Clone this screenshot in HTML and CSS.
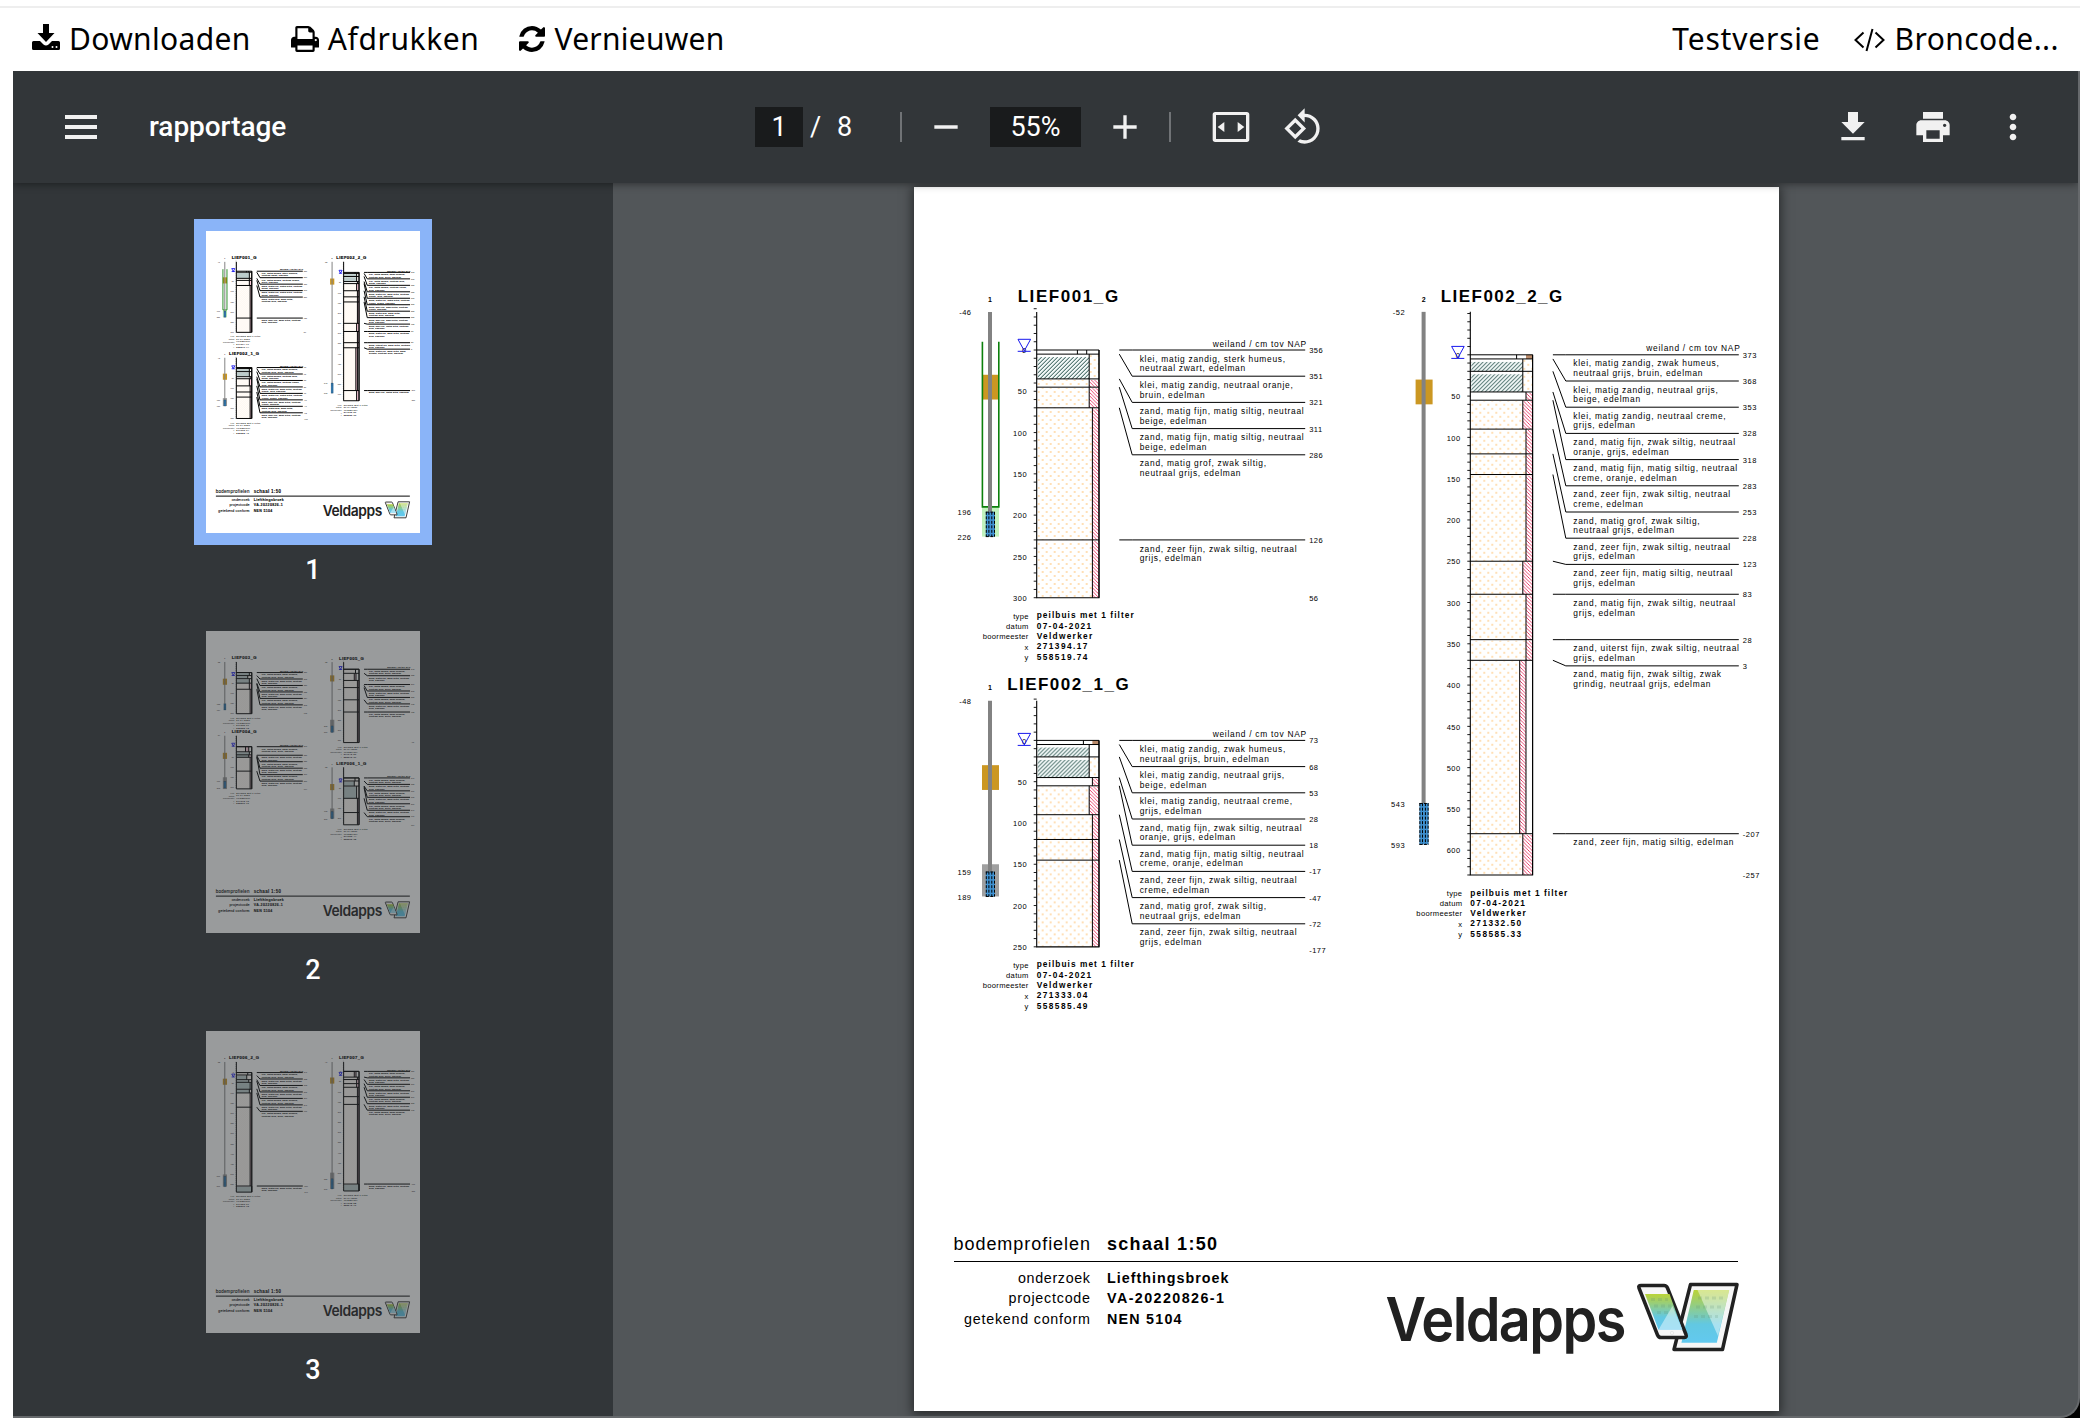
FILE: index.html
```html
<!DOCTYPE html>
<html lang="nl">
<head>
<meta charset="utf-8">
<title>rapportage</title>
<link rel="stylesheet" href="styles.css">
</head>
<body>
<header class="actions">
  <a class="action download"><svg class="ico-download" viewBox="0 0 28 26"><path d="M11 0h6v9h5.500l-8.500 9-8.500-9H11zM1.500 17h6.500l3.500 3.500q2.500 2 5 0L20 17h6.500q1.500 0 1.500 1.500v6q0 1.500-1.500 1.500h-25Q0 26 0 24.500v-6Q0 17 1.500 17z"/><circle cx="20.500" cy="23" r="1" fill="#fff"/><circle cx="24.500" cy="23" r="1" fill="#fff"/></svg><span>Downloaden</span></a>
  <a class="action print"><svg class="ico-print" viewBox="0 128 1664 1536"><path d="M384 1536h896v-256h-896v256zm0-640h896v-384h-160q-40 0-68-28t-28-68v-160h-640v640zm1152 64q0-26-19-45t-45-19-45 19-19 45 19 45 45 19 45-19 19-45zm128 0v416q0 13-9.500 22.500t-22.500 9.500h-224v160q0 40-28 68t-68 28h-960q-40 0-68-28t-28-68v-160h-224q-13 0-22.500-9.500t-9.500-22.500v-416q0-79 56.500-135.500t135.500-56.500h64v-544q0-40 28-68t68-28h672q40 0 88 20t76 48l152 152q28 28 48 76t20 88v256h64q79 0 135.500 56.500t56.500 135.500z"/></svg><span>Afdrukken</span></a>
  <a class="action refresh"><svg class="ico-refresh" viewBox="0 0 1536 1536"><path d="M1511 928q0 5-1 7-64 268-268 434.500t-478 166.500q-146 0-282.500-55t-243.500-157l-129 129q-19 19-45 19t-45-19-19-45v-448q0-26 19-45t45-19h448q26 0 45 19t19 45-19 45l-137 137q71 66 161 102t187 36q134 0 250-65t186-179q11-17 53-117 8-23 30-23h192q13 0 22.500 9.500t9.500 22.500zm25-800v448q0 26-19 45t-45 19h-448q-26 0-45-19t-19-45 19-45l138-138q-148-137-349-137-134 0-250 65t-186 179q-11 17-53 117-8 23-30 23h-199q-13 0-22.500-9.500t-9.500-22.500v-7q65-268 270-434.500t480-166.500q146 0 284 55.500t245 156.500l130-129q19-19 45-19t45 19 19 45z"/></svg><span>Vernieuwen</span></a>
  <span class="spring"></span>
  <a class="action version">Testversie</a>
  <a class="action source"><svg class="ico-code" viewBox="0 0 31 24"><path d="M9.500 4.500L1.500 12l8 7.500M21.500 4.500l8 7.500-8 7.500M18.500 1l-6 22" fill="none" stroke="#000" stroke-width="2"/></svg><span>Broncode...</span></a>
</header>

<main class="frame">
  <div class="viewer">
    <div class="toolbar">
      <div class="start">
        <svg class="menu" viewBox="0 0 20 20"><path d="M2 4h16v2H2zM2 9h16v2H2zM2 14h16v2H2z"/></svg>
        <span class="doc-title">rapportage</span>
      </div>
      <div class="center">
        <span class="field page-no">1</span><span class="slash">/</span><span class="total">8</span>
        <i class="sep"></i>
        <svg class="minus" viewBox="0 0 24 24"><path d="M5 11h14v2H5z"/></svg>
        <span class="field zoom">55%</span>
        <svg class="plus" viewBox="0 0 24 24"><path d="M19 13h-6v6h-2v-6H5v-2h6V5h2v6h6v2z"/></svg>
        <i class="sep"></i>
        <svg class="fit" viewBox="0 0 24 24"><path d="M21.500 3h-19C1.600 3 1 3.600 1 4.500v15c0 .900.600 1.500 1.500 1.500h19c.900 0 1.500-.600 1.500-1.500v-15c0-.900-.600-1.500-1.500-1.500zM21 19.200H3V4.800h18zM8 9v6l-4-3zM16 9v6l4-3z"/></svg>
        <svg class="rotate" viewBox="0 0 24 24"><path d="M7.340 6.410L.860 12.900l6.490 6.480 6.490-6.480-6.500-6.490zM3.690 12.900l3.660-3.660L11 12.900l-3.660 3.660-3.650-3.660zm15.670-6.260C17.610 4.880 15.300 4 13 4V.760L8.760 5 13 9.240V6c1.790 0 3.580.680 4.950 2.050 2.730 2.730 2.730 7.170 0 9.900C16.580 19.320 14.790 20 13 20c-.970 0-1.940-.210-2.840-.610l-1.490 1.490C10.020 21.620 11.510 22 13 22c2.300 0 4.610-.880 6.360-2.640 3.520-3.510 3.520-9.210 0-12.720z"/></svg>
      </div>
      <div class="end">
        <svg viewBox="0 0 24 24"><path d="M19 9h-4V3H9v6H5l7 7 7-7zM5 18v2h14v-2H5z"/></svg>
        <svg viewBox="0 0 24 24"><path d="M19 8H5c-1.660 0-3 1.340-3 3v6h4v4h12v-4h4v-6c0-1.660-1.340-3-3-3zm-3 11H8v-5h8v5zm3-7c-.550 0-1-.450-1-1s.450-1 1-1 1 .450 1 1-.450 1-1 1zm-1-9H6v4h12V3z"/></svg>
        <svg viewBox="0 0 24 24"><path d="M12 8c1.100 0 2-.900 2-2s-.900-2-2-2-2 .900-2 2 .900 2 2 2zm0 2c-1.100 0-2 .900-2 2s.900 2 2 2 2-.900 2-2-.900-2-2-2zm0 6c-1.100 0-2 .900-2 2s.900 2 2 2 2-.900 2-2-.900-2-2-2z"/></svg>
      </div>
    </div>
    <div class="panes">
      <nav class="sidebar">
        <div class="thumb active"><div class="sheet" data-page="0"></div><span>1</span></div>
        <div class="thumb"><div class="sheet" data-page="1"></div><span>2</span></div>
        <div class="thumb"><div class="sheet" data-page="2"></div><span>3</span></div>
      </nav>
      <section class="content"><article class="page" data-page="0"></article></section>
    </div>
  </div>
</main>

<svg class="defs" width="0" height="0">
  <defs>
    <pattern id="sand" width="8" height="8" patternUnits="userSpaceOnUse"><path d="M1.200 2h1.600M2 1.200v1.600M5.200 6h1.600M6 5.200v1.600" stroke="#ffc478" stroke-width=".8"/></pattern>
    <pattern id="silt" width="3.500" height="3.500" patternUnits="userSpaceOnUse"><path d="M-1-1l6 6M-1 2.500l2 2M2.500-1l2 2" stroke="#e8275a" stroke-width=".85"/></pattern>
    <pattern id="clay" width="4" height="4" patternUnits="userSpaceOnUse"><rect width="4" height="4" fill="#f1f7f7"/><path d="M-1 5l6-6M-1 1l2-2M3 5l2-2" stroke="#1d4a44" stroke-width="1"/></pattern>
    <linearGradient id="screen" x1="0" y1="0" x2="0" y2="1"><stop offset="0" stop-color="#b9d437"/><stop offset=".1" stop-color="#aed04f"/><stop offset=".65" stop-color="#62c8e2"/><stop offset="1" stop-color="#62c9ef"/></linearGradient>
  </defs>
</svg>
<script src="report.js"></script>
</body>
</html>
```
FILE: styles.css
```css
* { box-sizing: border-box; }
body { margin: 0; height: 1418px; overflow: hidden; background: #fff; font-family: "Noto Sans", sans-serif; }

.actions { height: 71px; padding: 0 21px 0 32px; display: flex; align-items: flex-start; background: linear-gradient(#eee, #eee) 0 6px / 100% 2px no-repeat; font-size: 30px; line-height: 40px; color: #000; }
.action { display: flex; align-items: flex-start; margin-top: 19px; margin-right: 40px; }
.action svg { margin-right: 9px; flex: none; }
.download { letter-spacing: .35px; }
.print { letter-spacing: .6px; }
.refresh { letter-spacing: .25px; }
.version { letter-spacing: .8px; margin-right: 33px; }
.source { letter-spacing: .4px; margin-right: 0; }
.action .ico-code { margin-right: 10px; }
.ico-download { width: 28px; height: 26px; margin-top: 5px; }
.ico-print { width: 28px; height: 26px; margin-top: 7px; }
.ico-refresh { width: 26px; height: 26px; margin-top: 7px; }
.ico-code { width: 31px; height: 24px; margin-top: 9px; }
.spring { flex: 1; }

.frame { margin-left: 13px; height: 1347px; background: #000; }
.viewer { height: 1347px; display: flex; flex-direction: column; overflow: hidden; background: #525659; border-right: 2px solid #66696c; border-bottom: 2px solid #66696c; border-bottom-right-radius: 20px; }
.toolbar { position: relative; z-index: 1; flex: none; height: 112px; background: #323639; box-shadow: 0 1px 8px rgba(0,0,0,.45); display: grid; grid-template-columns: 742px 1fr 280px; align-items: center; font-family: Roboto, sans-serif; color: #fff; }
.toolbar svg { width: 40px; height: 40px; fill: #f1f1f1; flex: none; }
.start, .center, .end { display: flex; align-items: center; }
.start { padding-left: 48px; }
.doc-title { margin: 0 0 2px 48px; font-size: 28px; font-weight: 500; letter-spacing: -.05px; }
.center { font-size: 27px; }
.field { height: 40px; line-height: 40px; background: #191b1c; text-align: center; }
.page-no { width: 48px; }
.slash { width: 10px; margin-left: 7px; }
.total { width: 16px; margin-left: 17px; }
.sep { width: 2px; height: 30px; background: #707376; margin-left: 47px; }
.minus { margin-left: 24px; }
.zoom { width: 91px; margin-left: 24px; }
.plus { margin-left: 24px; }
.plus + .sep { margin-left: 24px; }
.toolbar .fit { margin-left: 40px; }
.rotate { margin-left: 32px; }
.end { gap: 40px; padding-left: 20px; justify-content: flex-end; padding-right: 45px; }

.panes { flex: 1; display: flex; min-height: 0; }
.sidebar { width: 600px; flex: none; background: #323639; padding-top: 48px; }
.thumb { height: 400px; display: flex; flex-direction: column; align-items: center; font: 500 27px/32px Roboto, sans-serif; color: #fff; }
.thumb .sheet { width: 214px; height: 302px; background: #fff; opacity: .5; }
.thumb.active .sheet { opacity: 1; box-shadow: 0 0 0 12px #8ab4f8; }
.thumb span { margin-top: 21px; }
.content { flex: 1; display: flex; justify-content: center; padding: 4px 0 0 2px; }
.page { width: 865px; height: 1224px; background: #fff; box-shadow: 0 2px 10px 2px rgba(0,0,0,.5); }
.page svg, .sheet svg { display: block; width: 100%; height: 100%; }
.defs { position: absolute; }

.report { font-family: "Liberation Sans", Arial, sans-serif; fill: #000; }
.report .rule { fill: none; stroke: #000; stroke-width: 1; }
.report .axis { fill: none; stroke: #000; stroke-width: 1.1; }
.report .tick { fill: none; stroke: #000; stroke-width: .9; }
.report .water { fill: none; stroke: #1717ee; stroke-width: 1; }
.report .casing { fill: none; stroke: #0c800c; stroke-width: 1.6; }
.report .slots { fill: none; stroke: #000; stroke-width: 1; stroke-dasharray: 3 1.500; }
.report .name { font-size: 17px; font-weight: 700; }
.report .tube-no { font-size: 7px; font-weight: 700; }
.report .num { font-size: 7.500px; letter-spacing: .5px; }
.report .desc { font-size: 8.400px; letter-spacing: .73px; }
.report .label { font-size: 7.600px; letter-spacing: .3px; }
.report .value { font-size: 8.300px; font-weight: 700; }
.report .head { font-size: 18px; }
.report .row { font-size: 14.300px; }
.report .bold { font-weight: 700; }
.report .brand { font-family: Inter, sans-serif; font-weight: 600; font-size: 60px; fill: #212121; }
.sheet .report .rule, .sheet .report .axis { stroke-width: 4; }
.sheet .report .tick { stroke-width: 1.500; }
.sheet .report .water { stroke-width: 3.500; }
.sheet .report .casing { stroke-width: 3.500; }
.sheet .report .name { stroke: #000; stroke-width: .6; }
.sheet .report .desc, .sheet .report .head, .sheet .report .row { stroke: #000; stroke-width: .35; }
```
FILE: report.js
```js
const CM = 0.8257;
const COL = 62.3;
const STEP = 26.2;
const A = 52.5, B = 55.7;

const filler = (n) => Array.from({ length: n }, (_, i) =>
  i % 2 ? 'zand, matig fijn, zwak siltig, neutraal|grijs, edelman'
        : 'klei, matig zandig, zwak humeus,|neutraal grijs, bruin, edelman');

// soil: [from, to, main fill, split, side fill, side end]
const pages = [
  [
    { name: 'LIEF001_G', no: 1, len: 100, x: 122.7, y: 163, top: -46, end: 300, nap: 356, water: 1.3,
      block: [30, 60], filter: [196, 226], pack: [190, 226, '#c1f2bd'], casing: [-10, 190],
      soil: [[5, 35, 'clay', A, 'sand'], [35, 45, 'sand', A, 'silt'], [45, 70, 'sand', A, 'silt'],
             [70, 230, 'sand', B, 'silt'], [230, 300, 'sand', B, 'silt']], topCuts: [40.7, 50],
      depths: [0, 5, 35, 45, 70, 230],
      texts: ['klei, matig zandig, sterk humeus,|neutraal zwart, edelman', 'klei, matig zandig, neutraal oranje,|bruin, edelman',
              'zand, matig fijn, matig siltig, neutraal|beige, edelman', 'zand, matig fijn, matig siltig, neutraal|beige, edelman',
              'zand, matig grof, zwak siltig,|neutraal grijs, edelman', 'zand, zeer fijn, zwak siltig, neutraal|grijs, edelman'],
      xy: ['271394.17', '558519.74'] },
    { name: 'LIEF002_1_G', no: 1, len: 121, x: 122.7, y: 553.4, top: -48, end: 250, nap: 73, water: 5,
      block: [30, 60], filter: [159, 189], pack: [150, 189, '#a0a0a0'],
      soil: [[5, 20, 'clay', A], [20, 45, 'clay', A, 'sand'], [45, 55, '', B, 'silt'], [55, 90, 'sand', A, 'silt'],
             [90, 120, 'sand', B, 'silt'], [120, 145, 'sand', B, 'silt'], [145, 250, 'sand', B, 'silt']], topCuts: [46.7], peat: true,
      depths: [0, 5, 20, 45, 55, 90, 120, 145],
      texts: ['klei, matig zandig, zwak humeus,|neutraal grijs, bruin, edelman', 'klei, matig zandig, neutraal grijs,|beige, edelman',
              'klei, matig zandig, neutraal creme,|grijs, edelman', 'zand, matig fijn, zwak siltig, neutraal|oranje, grijs, edelman',
              'zand, matig fijn, matig siltig, neutraal|creme, oranje, edelman', 'zand, zeer fijn, zwak siltig, neutraal|creme, edelman',
              'zand, matig grof, zwak siltig,|neutraal grijs, edelman', 'zand, zeer fijn, zwak siltig, neutraal|grijs, edelman'],
      xy: ['271333.04', '558585.49'] },
    { name: 'LIEF002_2_G', no: 2, len: 121, x: 556.3, y: 167.8, top: -52, end: 630, nap: 373, water: 3.6,
      block: [30, 60], filter: [543, 593],
      soil: [[5, 20, 'clay', A, 'sand'], [20, 45, 'clay', A, 'sand'], [45, 55, '', B, 'silt'], [55, 90, 'sand', A, 'silt'],
             [90, 120, 'sand', B, 'silt'], [120, 145, 'sand', B, 'silt'], [145, 250, 'sand', B, 'silt'], [250, 290, 'sand', A, 'silt'],
             [290, 345, 'sand', B, 'silt'], [345, 370, 'sand', B, 'silt'], [370, 580, 'sand', 49.4, 'silt', B], [580, 630, 'sand', A, 'silt']],
      topCuts: [46.3], peat: true,
      depths: [0, 5, 20, 45, 55, 90, 120, 145, 250, 290, 345, 370, 580],
      texts: ['klei, matig zandig, zwak humeus,|neutraal grijs, bruin, edelman', 'klei, matig zandig, neutraal grijs,|beige, edelman',
              'klei, matig zandig, neutraal creme,|grijs, edelman', 'zand, matig fijn, zwak siltig, neutraal|oranje, grijs, edelman',
              'zand, matig fijn, matig siltig, neutraal|creme, oranje, edelman', 'zand, zeer fijn, zwak siltig, neutraal|creme, edelman',
              'zand, matig grof, zwak siltig,|neutraal grijs, edelman', 'zand, zeer fijn, zwak siltig, neutraal|grijs, edelman',
              'zand, zeer fijn, matig siltig, neutraal|grijs, edelman', 'zand, matig fijn, zwak siltig, neutraal|grijs, edelman',
              'zand, uiterst fijn, zwak siltig, neutraal|grijs, edelman', 'zand, matig fijn, zwak siltig, zwak|grindig, neutraal grijs, edelman',
              'zand, zeer fijn, matig siltig, edelman'],
      xy: ['271332.50', '558585.33'] }
  ],
  [
    { name: 'LIEF003_G', no: 1, len: 100, x: 122.7, y: 168.4, top: -52, end: 202, nap: 380, water: 12,
      block: [30, 60], filter: [153, 184],
      soil: [[0, 15, 'clay', A, 'sand'], [15, 30, 'clay', 46, 'sand'], [30, 52, 'clay', A, 'sand'], [52, 82, 'sand', A, 'silt'], [82, 202, 'sand', B, 'silt']],
      depths: [0, 15, 30, 52, 56, 82], xy: ['271330.07', '558585.12'] },
    { name: 'LIEF004_G', no: 1, len: 100, x: 122.7, y: 468.9, top: -54, end: 207, nap: 371, water: -2,
      block: [30, 60], filter: [170, 203], pack: [150, 208, '#a0a0a0'],
      soil: [[0, 25, 'sand', 37, 'silt', 50], [25, 40, 'clay', A, 'sand'], [40, 52, 'clay', 50, 'silt'], [52, 120, 'sand', B, 'silt'], [120, 207, 'sand', B, 'silt']],
      depths: [0, 42, 44, 48, 52, 120], xy: ['271312.16', '558560.19'] },
    { name: 'LIEF005_G', no: 2, len: 100, x: 556.3, y: 155, top: -35, end: 360, nap: 342, water: 1,
      block: [30, 60], filter: [278, 310], pack: [248, 310, '#a0a0a0'],
      soil: [[0, 20, 'sand', 48], [20, 55, 'sand', 43, 'silt', 50], [55, 90, 'sand', B, 'silt'], [90, 150, 'sand', B, 'silt'], [150, 210, 'sand', B, 'silt'], [210, 360, 'sand', B, 'silt']],
      depths: [0, 20, 75, 80, 90, 150, 210], xy: ['271342.50', '558575.31'] },
    { name: 'LIEF006_1_G', no: 1, len: 121, x: 556.3, y: 595.5, top: -52, end: 230, nap: 347, water: 16,
      block: [30, 60], filter: [165, 200], pack: [150, 200, '#a0a0a0'],
      soil: [[0, 15, 'sand', 46, 'sand'], [15, 40, 'clay', 43, 'sand'], [40, 100, 'clay', A, 'sand'], [100, 170, 'sand', B, 'silt'], [170, 230, 'sand', B, 'silt']],
      depths: [0, 15, 40, 42, 48, 100, 170], xy: ['271352.44', '558565.38'] }
  ],
  [
    { name: 'LIEF006_2_G', no: 2, len: 121, x: 122.7, y: 168.4, top: -52, end: 587, nap: 347, water: 18,
      block: [30, 60], filter: [510, 560], pack: [500, 560, '#a0a0a0'],
      soil: [[0, 12, 'sand', 46], [12, 35, 'clay', 42, 'sand'], [35, 48, 'clay', 50, 'sand'], [48, 82, 'clay', B], [82, 100, 'clay', A, 'sand'],
             [100, 170, 'sand', B, 'silt'], [170, 557, 'sand', B, 'silt'], [557, 587, 'clay', COL]],
      depths: [0, 15, 35, 42, 80, 100, 170, 557], xy: ['271353.07', '558566.12'] },
    { name: 'LIEF007_G', no: 1, len: 100, x: 556.3, y: 163.7, top: -46, end: 587, nap: 357, water: 16,
      block: [30, 60], filter: [527, 577], pack: [497, 577, '#a0a0a0'],
      soil: [[0, 28, 'sand', 43, 'silt', 50], [28, 40, 'sand', B, 'silt'], [40, 60, 'sand', A, 'silt'], [60, 78, 'sand', A, 'silt'], [78, 124, 'sand', B, 'silt'],
             [124, 162, 'sand', B, 'silt'], [162, 553, 'sand', B, 'silt'], [553, 587, 'clay', COL]],
      depths: [0, 28, 40, 60, 78, 124, 162, 553], xy: ['271338.58', '558545.70'] }
  ]
];

const text = (cls, x, y, str, extra = '') => `<text class="${cls}" x="${x}" y="${y}" ${extra}>${str}</text>`;
const fit = (n) => `textLength="${n}"`;
const rect = (x, y, w, h, fill) => `<rect x="${x}" y="${y}" width="${w}" height="${h}" fill="${fill}"/>`;
const END = 'text-anchor="end"';

// Groundwater tube left of the column
function tube(p) {
  const d = (cm) => cm * CM;
  const [ft, fb] = p.filter;
  let s = '';
  if (p.pack) s += rect(-54.7, d(p.pack[0]), 17, d(p.pack[1] - p.pack[0]), p.pack[2]);
  s += rect(-54.7, d(p.block[0]), 17, d(p.block[1] - p.block[0]), '#cb9722');
  if (p.casing) s += `<path class="casing" d="M-54.300 ${d(p.casing[0])}V${d(p.casing[1])}H-37.900V${d(p.casing[0])}"/>`;
  s += rect(-48.7, d(p.top), 4, d(ft - p.top), '#828282');
  s += rect(-50.9, d(ft), 9.2, d(fb - ft), '#3f92d2');
  s += `<path class="slots" d="M-50.400 ${d(ft)}V${d(fb)}M-47.800 ${d(ft)}V${d(fb)}M-44.900 ${d(ft)}V${d(fb)}M-42.200 ${d(ft)}V${d(fb)}M-50.900 ${d(ft) + .3}h9.200M-50.900 ${d(fb)}h9.200"/>`;
  s += text('num', -65.2, d(p.top) + 3, p.top, END);
  s += text('num', -65.2, d(ft) + 3.5, ft, END) + text('num', -65.2, d(fb) + 3.5, fb, END);
  s += text('tube-no', -46.7, d(p.top) - 10.3, p.no, 'text-anchor="middle"');
  return s;
}

// Soil column with its depth scale
function column(p) {
  const d = (cm) => cm * CM;
  let s = '', lines = '';
  for (const [from, to, main, split, side, sideEnd = COL] of p.soil) {
    const pad = main === 'clay' && to - from > 12 ? 3 : 1;
    if (main) s += rect(1, d(from) + pad, split - 1, d(to - from) - pad, `url(#${main})`);
    if (side) s += rect(split, d(from) + 1, sideEnd - split, d(to - from) - 1, `url(#${side})`);
    lines += `M0 ${d(from)}H${COL}M${split} ${d(from)}V${d(to)}`;
    if (sideEnd < COL) lines += `M${sideEnd} ${d(from)}V${d(to)}`;
  }
  if (p.peat) s += rect(B, 0, COL - B, d(5), '#b98a6a');
  for (const c of p.topCuts || []) lines += `M${c} 0v${d(5)}`;
  s += `<path class="rule" d="${lines}M0 0H${COL}V${d(p.end)}"/>`;
  s += `<path class="axis" d="M0 ${d(p.top)}V${d(p.end)}H${COL}V0"/>`;
  let ticks = '';
  for (let cm = -50; cm <= p.end; cm += 10) if (cm >= p.top - 5) ticks += `M-3 ${d(cm)}h3`;
  s += `<path class="tick" d="${ticks}"/>`;
  for (let cm = 0; cm <= p.end; cm += 50) s += text('num', cm ? -9.6 : -10, d(cm) + 3.2, cm, END);
  s += `<path class="water" d="M-18.700 ${p.water - 12}h12.600l-6.300 11.500zM-19 ${p.water}h13"/>`;
  return s;
}

// Layer descriptions with their leader lines
function legend(p) {
  const texts = p.texts || filler(p.depths.length);
  let s = text('desc', 270.2, -3.4, 'weiland / cm tov NAP', END), path = '', prev = -100;
  p.depths.forEach((cm, i) => {
    const y = Math.max(cm * CM, prev + STEP);
    prev = y;
    path += `M82.600 ${cm * CM}L95.500 ${y}H268.500`;
    s += text('num', 272.5, y + 3, p.nap - cm);
    texts[i].split('|').forEach((t, k) => { s += text('desc', 103, y + 11.6 + k * 9.7, t); });
  });
  s += text('num', 272.5, Math.max(p.end * CM, prev + STEP) + 3, p.nap - p.end);
  return s + `<path class="rule" d="${path}"/>`;
}

function profile(p) {
  const b = p.end * CM;
  const rows = [['type', 'peilbuis met 1 filter', 97], ['datum', '07-04-2021', 54.5], ['boormeester', 'Veldwerker', 55.5], ['x', p.xy[0], 50.8], ['y', p.xy[1], 50.8]];
  let s = text('name', COL / 2 - p.len / 2 - .2, p.top * CM - 10.3, p.name, fit(p.len + .5));
  rows.forEach(([k, v, w], i) => {
    const y = b + 20.6 + i * 10.3;
    s += text('label', -8, y + .3, k, END) + text('value', 0, y, v, fit(w));
  });
  return `<g transform="translate(${p.x} ${p.y})">${tube(p)}${column(p)}${legend(p)}${s}</g>`;
}

function footer() {
  let s = text('head', 39.5, 1063.3, 'bodemprofielen', fit(136.5)) + text('head bold', 193, 1063.3, 'schaal 1:50', fit(110));
  s += '<path class="rule" d="M40 1074.500H824"/>';
  [['onderzoek', 72, 'Liefthingsbroek', 121.5, 1096], ['projectcode', 81.5, 'VA-20220826-1', 117, 1116.3], ['getekend conform', 126, 'NEN 5104', 74.5, 1137]]
    .forEach(([k, kw, v, vw, y]) => { s += text('row', 176 - kw, y, k, fit(kw)) + text('row bold', 193, y, v, fit(vw)); });
  s += `<g transform="translate(471.500 1153.700) scale(.93 1)">${text('brand', 0, 0, 'Veldapps', fit(259))}</g>`;
  s += `<g stroke-linejoin="round">
    <path d="M776.500 1097.500H823L808.500 1162.500H760Z" fill="#f6f6f6" stroke="#212121" stroke-width="3.500"/>
    <path d="M779.800 1103H815.200L802.800 1155.700H767.400Z" fill="url(#screen)"/>
    <path d="M783.500 1103H815.200L804 1149Z" fill="#fff" opacity=".45"/>
    <path d="M727 1098.500H750Q752.500 1098.500 753.500 1101L772 1147.500Q773 1150.500 770.500 1150.500H747Q744.500 1150.500 743.500 1148L725 1101Q724 1098.500 727 1098.500Z" fill="#f6f6f6" stroke="#212121" stroke-width="3.500"/>
    <path d="M731 1107H755.500L768.400 1142.700H744.500Z" fill="url(#screen)"/>
    <path d="M758.500 1119L768.400 1142.700H744.500Z" fill="#fff" opacity=".45"/>
    <circle cx="758" cy="1146" r="1.700" fill="none" stroke="#ddd" stroke-width=".6"/>
    <path d="M737 1112.500h17M740 1119h17M743 1125.500h12M784 1111h25M782 1120h25M780 1129.500h24" stroke="#5a8a70" stroke-opacity=".18" stroke-width="3" stroke-dasharray="4 3" fill="none"/>
  </g>`;
  return s;
}

document.querySelectorAll('[data-page]').forEach((el) => {
  const list = pages[el.dataset.page];
  el.innerHTML = `<svg class="report" viewBox="0 0 865 1224" preserveAspectRatio="none">${list.map(profile).join('')}${footer()}</svg>`;
});
```
